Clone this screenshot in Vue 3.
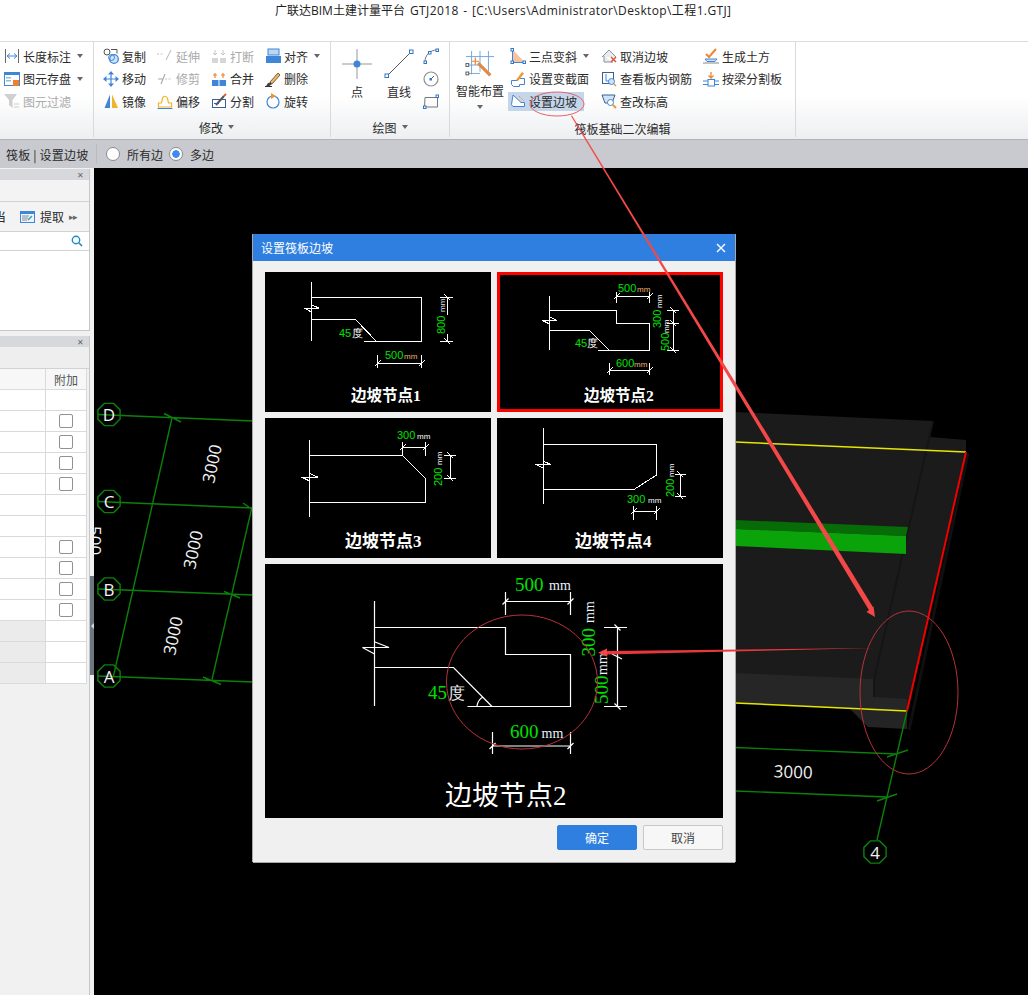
<template>
  <div class="page">
    <div class="titlebar">广联达BIM土建计量平台 <span class="title-file">GTJ2018 - [C:\Users\Administrator\Desktop\工程1.GTJ]</span></div>

    <div class="ribbon">
      <section class="group group-a">
        <div class="rows">
          <div v-for="item in groupA" :key="item.label" class="tool" :class="{ off: item.off }">
            <svg class="ico" viewBox="0 0 16 16" v-html="icons[item.icon]"></svg>
            <span>{{ item.label }}</span>
            <i v-if="item.caret" class="caret"></i>
          </div>
        </div>
      </section>

      <section class="group group-b">
        <div class="rows cols-4">
          <div v-for="item in groupB" :key="item.label" class="tool" :class="{ off: item.off }">
            <svg class="ico" viewBox="0 0 16 16" v-html="icons[item.icon]"></svg>
            <span>{{ item.label }}</span>
            <i v-if="item.caret" class="caret"></i>
          </div>
        </div>
        <div class="group-label">修改<i class="caret"></i></div>
      </section>

      <section class="group group-c">
        <div class="draw">
          <div class="big big-point">
            <svg width="32" height="32" viewBox="0 0 32 32">
              <path d="M16 1v30M1 16h30" stroke="#8f99a3" fill="none" />
              <circle cx="16" cy="16" r="3.5" fill="#3f86d8" />
            </svg>
            <span>点</span>
          </div>
          <div class="big big-line">
            <svg width="32" height="32" viewBox="0 0 32 32">
              <path d="M4 28L28 4" stroke="#555" fill="none" />
              <rect x="2" y="26" width="3.5" height="3.5" fill="#fff" stroke="#2f76c8" />
              <rect x="26.5" y="2" width="3.5" height="3.5" fill="#fff" stroke="#2f76c8" />
            </svg>
            <span>直线</span>
          </div>
          <div class="minis">
            <svg width="16" height="16" viewBox="0 0 16 16">
              <path d="M2 14C2 7 7 2 14 2" stroke="#777" fill="none" />
              <rect x="1" y="13" width="2.5" height="2.5" fill="#fff" stroke="#2f76c8" />
              <rect x="5.5" y="3.5" width="2.5" height="2.5" fill="#fff" stroke="#2f76c8" />
              <rect x="13" y="1" width="2.5" height="2.5" fill="#fff" stroke="#2f76c8" />
            </svg>
            <svg width="16" height="16" viewBox="0 0 16 16">
              <circle cx="8" cy="8" r="7" stroke="#8a8f96" stroke-width="1.2" fill="#fff" />
              <path d="M8 8L11 5" stroke="#555" fill="none" />
              <rect x="6.5" y="7" width="2.5" height="2.5" fill="#2f76c8" />
            </svg>
            <svg width="16" height="16" viewBox="0 0 16 16">
              <path d="M2 4.5h12.5v9.5H1.5z" stroke="#777" fill="none" />
              <rect x="13" y="2" width="2.5" height="2.5" fill="#fff" stroke="#2f76c8" />
              <rect x="0.5" y="13" width="2.5" height="2.5" fill="#fff" stroke="#2f76c8" />
            </svg>
          </div>
        </div>
        <div class="group-label">绘图<i class="caret"></i></div>
      </section>

      <section class="group group-d">
        <div class="smart-area">
          <div class="big big-smart">
            <svg width="30" height="30" viewBox="0 0 32 32">
              <path d="M7 1v25M16 1v22M25 1v22M1 7h30M1 16h16M1 25h15" stroke="#6fa3de" fill="none" />
              <rect x="1" y="14.5" width="3" height="3" fill="#fff" stroke="#555" />
              <rect x="1" y="23.5" width="3" height="3" fill="#fff" stroke="#555" />
              <path d="M14 14l13 13" stroke="#e08a4a" stroke-width="3.5" fill="none" />
              <path d="M11 8v8M7 12h8" stroke="#e8863a" stroke-width="1.3" fill="none" />
            </svg>
            <span>智能布置</span>
            <i class="caret caret-below"></i>
          </div>
          <div class="rows cols-slab">
            <div v-for="item in groupD" :key="item.label" class="tool" :class="{ active: item.active }">
              <svg class="ico" viewBox="0 0 16 16" v-html="icons[item.icon]"></svg>
              <span>{{ item.label }}</span>
              <i v-if="item.caret" class="caret"></i>
            </div>
          </div>
        </div>
        <div class="group-label">筏板基础二次编辑</div>
      </section>
      <section class="group group-rest"></section>
    </div>

    <div class="optionbar">
      <span class="crumb">筏板 | 设置边坡</span>
      <span class="opt-sep"></span>
      <label class="radio"><i></i>所有边</label>
      <label class="radio checked"><i></i>多边</label>
    </div>

    <div class="workspace">
      <aside class="side">
        <div class="panel panel-top">
          <div class="panel-head"><span class="x">✕</span></div>
          <div class="panel-strip"></div>
          <div class="panel-tools">
            <span class="clipped">当</span>
            <svg class="extract" width="15" height="12" viewBox="0 0 15 12">
              <rect x="0.5" y="0.5" width="14" height="11" fill="#eef4fb" stroke="#3f86d8" />
              <path d="M0 1h15v2H0z" fill="#3f86d8" />
              <path d="M2 5h7M2 7h6M2 9h5" stroke="#7f8c99" fill="none" />
              <path d="M8 9l4-4" stroke="#3aa0a0" stroke-width="1.5" fill="none" />
            </svg>
            <span>提取</span>
            <span class="more">▸▸</span>
          </div>
          <div class="panel-search">
            <svg width="12" height="12" viewBox="0 0 12 12">
              <circle cx="5" cy="5" r="3.7" fill="none" stroke="#1e8ac4" stroke-width="1.4" />
              <path d="M8 8l3 3" stroke="#1e8ac4" stroke-width="1.6" fill="none" />
            </svg>
          </div>
        </div>

        <div class="panel panel-bottom">
          <div class="panel-head"><span class="x">✕</span></div>
          <div class="panel-strip strip-tall"></div>
          <div class="table">
            <div class="tr th">
              <div class="td-left"></div>
              <div class="td-right">附加</div>
            </div>
            <div v-for="(row, i) in propRows" :key="i" class="tr">
              <div class="td-left" :class="{ shaded: row === 'grey' }"></div>
              <div class="td-right"><i v-if="row === 'check'" class="checkbox"></i></div>
            </div>
          </div>
        </div>
      </aside>

      <div class="gutter"><span class="handle"></span></div>

      <div class="canvas">
        <svg class="scene" viewBox="94 168 934 827">
          <polygon points="735,412 933,421 930,437 966,440 966,452 907,711 735,703" fill="#1b1b1b" />
          <polygon points="735,673 874,679 874,697 907,699 907,711 735,703" fill="#262626" />
          <polygon points="850,709 907,711 907,729 868,727" fill="#242424" />
          <path d="M933 421L874 680V697" stroke="#151515" stroke-width="2" fill="none" />
          <path d="M966 452L907 729" stroke="#101010" stroke-width="3" fill="none" transform="translate(2 1)" />
          <polygon points="735,520 908,527 906,536 735,529" fill="#076b07" />
          <polygon points="735,529 906,536 906,554 735,546" fill="#0aa30a" />
          <path d="M735 442L966 452M735 703L907 711" stroke="#e6e600" stroke-width="1.5" fill="none" />
          <path d="M966 452L907 711" stroke="#f00000" stroke-width="2" fill="none" />
          <path :d="gridLines" stroke="#0b800b" stroke-width="1.4" fill="none" />
          <g v-for="m in markers" :key="m.t">
            <polygon :points="octagon(m.x, m.y)" fill="none" stroke="#0b800b" stroke-width="1.4" />
            <text :x="m.x" :y="m.y + 6.5" class="axis" text-anchor="middle">{{ m.t }}</text>
          </g>
          <text v-for="d in spans" :key="d.x" class="axis" text-anchor="middle"
            :transform="`translate(${d.x} ${d.y}) rotate(${d.r})`">3000</text>
          <text class="axis" transform="translate(89 526) rotate(90)">500</text>
        </svg>
      </div>
    </div>

    <div class="dialog">
      <header class="dialog-head">
        <span>设置筏板边坡</span>
        <svg width="10" height="10" viewBox="0 0 10 10">
          <path d="M1 1l8 8M9 1l-8 8" stroke="#fff" stroke-width="1.4" fill="none" />
        </svg>
      </header>
      <div class="thumbs">
        <div v-for="d in diagrams" :key="d.title" class="thumb" :class="{ selected: d.selected }">
          <svg class="drawing" :viewBox="d.box">
            <path :d="d.path" stroke="#fff" fill="none" shape-rendering="crispEdges" />
            <text v-for="t in d.texts" :key="t.t + t.x + t.y" :x="t.x" :y="t.y" :font-size="t.s" :fill="t.c"
              class="sans" :transform="t.r ? `rotate(-90 ${t.x} ${t.y})` : null">{{ t.t }}</text>
            <text :x="d.tx" :y="d.ty" :font-size="d.ts" class="caption">{{ d.title }}</text>
          </svg>
        </div>
        <div class="thumb preview">
          <svg class="drawing" :viewBox="preview.box">
            <path :d="preview.path" stroke="#fff" fill="none" stroke-width="1.2" />
            <text v-for="t in preview.texts" :key="t.t + t.x + t.y" :x="t.x" :y="t.y" :font-size="t.s" :fill="t.c"
              class="serif" :transform="t.r ? `rotate(-90 ${t.x} ${t.y})` : null">{{ t.t }}</text>
            <text :x="preview.tx" :y="preview.ty" :font-size="preview.ts" class="caption caption-big">{{ preview.title }}</text>
          </svg>
        </div>
      </div>
      <footer class="dialog-foot">
        <button class="btn primary">确定</button>
        <button class="btn">取消</button>
      </footer>
    </div>

    <svg class="marks" viewBox="0 0 1028 995">
      <ellipse cx="557" cy="104" rx="27" ry="12" fill="none" stroke="#e2626a" />
      <polygon points="571,116 572,115.5 873.5,608 869.5,611" fill="#f44848" />
      <polygon points="875,617 866.5,612 873.5,606.5" fill="#f44848" />
      <ellipse cx="522" cy="682" rx="75.5" ry="67" fill="none" stroke="#b8323a" />
      <ellipse cx="909" cy="692.5" rx="49" ry="81.5" fill="none" stroke="#b8323a" />
      <polygon points="875,648 607,651 607,654.5" fill="#e8383c" />
      <polygon points="598,652.7 607,648.5 607,656.5" fill="#f44848" />
    </svg>
  </div>
</template>

<script setup>
const icons = {
  measure: '<path d="M1.5 1v14M14.5 1v14" stroke="#666" fill="none"/><path d="M3 8h10M3 8l3-2.5M3 8l3 2.5M13 8l-3-2.5M13 8l-3 2.5" stroke="#3f86d8" fill="none"/>',
  save: '<rect x="0.5" y="1.5" width="15" height="13" fill="#fff" stroke="#3f86d8"/><path d="M0 1h16v3H0z" fill="#3f86d8"/><rect x="2" y="6" width="5" height="1.5" fill="#9bb8d8"/><rect x="2" y="9" width="5" height="1.5" fill="#9bb8d8"/><rect x="9" y="9" width="6" height="6" fill="#f08030"/>',
  filter: '<path d="M0 1h13L8.5 7v8L5 12V7z" fill="#c8c8c8"/><path d="M10 11h5M10 14h5" stroke="#c8c8c8" fill="none"/>',
  copy: '<circle cx="4" cy="4" r="3" fill="#fff" stroke="#555"/><path d="M8 1.5h6v4" stroke="#555" fill="none"/><circle cx="11" cy="11" r="4.3" fill="#cfe2f6" stroke="#3f86d8" stroke-width="1.3"/><circle cx="8.5" cy="9.5" r="3" fill="none" stroke="#3f86d8"/>',
  move: '<path d="M8 1v14M1 8h14" stroke="#3f86d8" stroke-width="1.2" fill="none"/><path d="M8 0l3 3.5H5zM8 16l3-3.5H5zM0 8l3.5-3v6zM16 8l-3.5-3v6z" fill="#3f86d8"/>',
  mirror: '<path d="M7 1.5V15H1.5z" fill="#3f86d8"/><path d="M9 1.5V15h6z" fill="#f0b429"/>',
  extend: '<path d="M0 6h7" stroke="#bbb" stroke-dasharray="2 1.5" fill="none"/><path d="M9 12l5-10" stroke="#aaa" fill="none"/>',
  trim: '<path d="M1 8h5" stroke="#999" fill="none"/><path d="M8 8h7" stroke="#bbb" stroke-dasharray="2 1.5" fill="none"/><path d="M4 13l4-10" stroke="#888" fill="none"/>',
  offset: '<path d="M1.5 14V10h3l1-4.5c.5-3 4-3 5 0l1 4.5h3v4z" fill="#fff" stroke="#f0b429" stroke-width="1.2"/><path d="M0.5 15.5h15" stroke="#3f86d8" fill="none"/>',
  breaks: '<path d="M1 10h6v5H1zM9 10h6v5H9z" fill="#cfcfcf"/><path d="M4 2v5M2 5l2 2 2-2M12 2v5M10 5l2 2 2-2" stroke="#bbb" fill="none"/>',
  merge: '<path d="M1 9h6.5v6H1zM8.5 9H15v6H8.5z" fill="#3f86d8"/><path d="M4 2v5M2 4h4M12 2v5M10 4h4" stroke="#e8863a" stroke-width="1.2" fill="none"/>',
  split: '<rect x="1.5" y="6.5" width="13" height="8" fill="#fff" stroke="#3a5f94"/><path d="M5 12L13 3" stroke="#555" stroke-width="2" fill="none"/><path d="M13 3l2-2" stroke="#d95b3a" stroke-width="2" fill="none"/><path d="M3 10.5h5" stroke="#3a5f94" fill="none"/>',
  align: '<rect x="3" y="1" width="11" height="6" fill="#bcd6f2" stroke="#3f86d8"/><rect x="1" y="8" width="15" height="7" fill="#3f86d8"/>',
  erase: '<path d="M5 11L13 2l2 2-8 9z" fill="#e9b77b" stroke="#8a5a2a"/><path d="M3 12c2-1 3-.5 4 1l-2.5 2H1z" fill="#444"/><path d="M0 15.5h7" stroke="#333" fill="none"/>',
  rotate: '<circle cx="8" cy="9" r="6" fill="none" stroke="#3f86d8" stroke-width="1.2"/><path d="M6 0v6l5-3z" fill="#f0962e"/>',
  threePoint: '<path d="M2.5 1.5V14.5H15z" fill="#f7c3a0"/><path d="M2.5 2v12.5H14" stroke="#3f86d8" fill="none"/><rect x="1" y="0.5" width="2.5" height="2.5" fill="#fff" stroke="#2f76c8"/><rect x="1" y="13" width="2.5" height="2.5" fill="#fff" stroke="#2f76c8"/><rect x="13" y="13" width="2.5" height="2.5" fill="#fff" stroke="#2f76c8"/>',
  section: '<path d="M1.5 9.5h6l2-2h5v6h-5v2h-6l-2-2z" fill="#fff" stroke="#3f86d8"/><path d="M6 9l6-8 2 1.5-6 7.5z" fill="#f0962e"/>',
  slope: '<path d="M1.5 11.5L3 2l8 7.5h3.5v4H3z" fill="#fff" stroke="#3f86d8"/><path d="M9 3l5 5" stroke="#f0962e" stroke-dasharray="1.5 1" fill="none"/>',
  cancel: '<path d="M1 9l7-7 7 7M3 8v6h9" fill="#e8ecf1" stroke="#8a929c"/><path d="M10 9l5 5M15 9l-5 5" stroke="#d9553a" stroke-width="1.5" fill="none"/>',
  rebar: '<rect x="1.5" y="1.5" width="11" height="11" fill="#fff" stroke="#3a5f94"/><path d="M5 3v7h4" stroke="#3f86d8" fill="none"/><circle cx="10.5" cy="10.5" r="3" fill="#cfe2f6" stroke="#3f86d8"/><path d="M13 13l2 2" stroke="#f0962e" stroke-width="1.5" fill="none"/>',
  level: '<path d="M1 2h13l-3 8H4z" fill="#cfe2f6" stroke="#3a5f94"/><circle cx="9.5" cy="9.5" r="3" fill="#fff" stroke="#3f86d8"/><path d="M12 12l3 3" stroke="#f0962e" stroke-width="2" fill="none"/>',
  earth: '<path d="M3 6l3 3 7-8" stroke="#f0862e" stroke-width="2" fill="none"/><path d="M2 11h12l-2 2.5H4z" fill="#cfe2f6" stroke="#3f86d8"/><path d="M0 15h16" stroke="#888" fill="none"/>',
  beamSplit: '<path d="M8 1v6M5.5 4.5L8 7l2.5-2.5" stroke="#f0862e" stroke-width="1.3" fill="none"/><rect x="5" y="8.5" width="6.5" height="6.5" fill="#fff" stroke="#3f86d8"/><path d="M0 10h5M11.5 13.5H16M0 13.5h5M11.5 10H16" stroke="#3f86d8" fill="none"/>'
}

const groupA = [
  { icon: 'measure', label: '长度标注', caret: true },
  { icon: 'save', label: '图元存盘', caret: true },
  { icon: 'filter', label: '图元过滤', off: true }
]

const groupB = [
  { icon: 'copy', label: '复制' },
  { icon: 'extend', label: '延伸', off: true },
  { icon: 'breaks', label: '打断', off: true },
  { icon: 'align', label: '对齐', caret: true },
  { icon: 'move', label: '移动' },
  { icon: 'trim', label: '修剪', off: true },
  { icon: 'merge', label: '合并' },
  { icon: 'erase', label: '删除' },
  { icon: 'mirror', label: '镜像' },
  { icon: 'offset', label: '偏移' },
  { icon: 'split', label: '分割' },
  { icon: 'rotate', label: '旋转' }
]

const groupD = [
  { icon: 'threePoint', label: '三点变斜', caret: true },
  { icon: 'cancel', label: '取消边坡' },
  { icon: 'earth', label: '生成土方' },
  { icon: 'section', label: '设置变截面' },
  { icon: 'rebar', label: '查看板内钢筋' },
  { icon: 'beamSplit', label: '按梁分割板' },
  { icon: 'slope', label: '设置边坡', active: true },
  { icon: 'level', label: '查改标高' }
]

const propRows = ['', 'check', 'check', 'check', 'check', '', '', 'check', 'check', 'check', 'check', 'grey', 'grey', 'grey']

// axis markers and grid on the canvas, in page coordinates
const markers = [
  { t: 'D', x: 109, y: 414.5 },
  { t: 'C', x: 109, y: 501.5 },
  { t: 'B', x: 109, y: 589 },
  { t: 'A', x: 109, y: 676 },
  { t: '4', x: 875, y: 852 }
]

const spans = [
  { x: 218, y: 465, r: -78 },
  { x: 199, y: 551, r: -78 },
  { x: 179, y: 637, r: -78 },
  { x: 793, y: 778, r: 2 }
]

const gridLines = [
  'M98 414.5L253 421', 'M98 501.5L253 508', 'M98 589L253 595', 'M98 676L253 682',
  'M735 747.5L897 754', 'M735 791L887 797',
  'M172 418L113.5 676', 'M252 507L212 679.5', 'M907 711L877 840',
  'M164 413.5L181 422', 'M243 503L253 510', 'M224 591.5L240 598', 'M203 677L221 684.5',
  'M887 757L908 750', 'M877 801L897 794'
].join('')

const octagon = (cx, cy, r = 12) => {
  const pts = []
  for (let i = 0; i < 8; i++) {
    const a = Math.PI / 8 + (i * Math.PI) / 4
    pts.push(`${(cx + r * Math.cos(a)).toFixed(1)},${(cy + r * Math.sin(a)).toFixed(1)}`)
  }
  return pts.join(' ')
}

const dimH = (x1, x2, y, top, bot) =>
  `M${x1} ${y}H${x2}M${x1} ${top}V${bot}M${x2} ${top}V${bot}M${x1 - 3} ${y + 3}L${x1 + 3} ${y - 3}M${x2 - 3} ${y + 3}L${x2 + 3} ${y - 3}`

const dimV = (x, ys, left, right) => {
  let d = `M${x} ${ys[0]}V${ys[ys.length - 1]}`
  for (const y of ys) {
    d += `M${left} ${y}H${right}M${x - 3} ${y - 3}L${x + 3} ${y + 3}`
  }
  return d
}

const green = '#00e000'

const diagrams = [
  {
    title: '边坡节点1',
    box: '265 272 226 140',
    tx: 351, ty: 401, ts: 15.5,
    path: 'M311.5 282V341M311.5 297.5H421.5V341.5H363.5M376.5 341.5L355.5 319.5H311.5M311.5 305L319 308H304L311.5 312'
      + dimH(377.5, 421.5, 363.5, 355, 368)
      + 'M447.5 297.5V315M447.5 334V341.5M440 297.5H453M440 341.5H453M444.5 294.5L450.5 300.5M444.5 338.5L450.5 344.5',
    texts: [
      { t: '800', x: 445, y: 334, s: 11, c: green, r: true },
      { t: 'mm', x: 445, y: 312, s: 8, c: '#dfeaf6', r: true },
      { t: '45', x: 339, y: 337, s: 11, c: green },
      { t: '度', x: 352, y: 337, s: 11, c: '#fff' },
      { t: '500', x: 385, y: 359, s: 11, c: green },
      { t: 'mm', x: 404, y: 359, s: 8, c: '#f0b070' }
    ]
  },
  {
    title: '边坡节点2',
    selected: true,
    box: '500 275 220 134',
    tx: 584, ty: 401, ts: 15.5,
    path: 'M549.5 296V350M549.5 310.5H616.5V323.5H649.5V350.5H597.5M609.5 350.5L589.5 330.5H549.5M550 317L556.5 320.5H542.5L549.5 324'
      + dimH(616.5, 649.5, 296.5, 292, 303)
      + dimV(673.5, [310.5, 323.5, 350.5], 667, 679)
      + dimH(609.5, 649.5, 370.5, 363, 375),
    texts: [
      { t: '500', x: 618, y: 292, s: 11, c: green },
      { t: 'mm', x: 637, y: 292, s: 8, c: '#f0b070' },
      { t: '600', x: 616, y: 367, s: 11, c: green },
      { t: 'mm', x: 634, y: 367, s: 8, c: '#f0b070' },
      { t: '45', x: 575, y: 347, s: 11, c: green },
      { t: '度', x: 587, y: 347, s: 11, c: '#fff' },
      { t: '300', x: 661, y: 328, s: 11, c: green, r: true },
      { t: 'mm', x: 662, y: 308, s: 8, c: '#fff', r: true },
      { t: '500', x: 669, y: 351, s: 11, c: green, r: true },
      { t: 'mm', x: 669, y: 333, s: 8, c: '#fff', r: true }
    ]
  },
  {
    title: '边坡节点3',
    box: '265 418 226 140',
    tx: 345, ty: 547, ts: 17,
    path: 'M309.5 440V516.5M309.5 455.5H402.5L425.5 478.5V502.5H309.5M310 473.5L317.5 477H301.5L309.5 481'
      + dimH(402.5, 425.5, 447.5, 442, 456)
      + dimV(450.5, [455.5, 478.5], 443.5, 456),
    texts: [
      { t: '300', x: 397, y: 439, s: 11, c: green },
      { t: 'mm', x: 417, y: 439, s: 8, c: '#fff' },
      { t: '200', x: 442, y: 486, s: 11, c: green, r: true },
      { t: 'mm', x: 442, y: 465, s: 8, c: '#fff', r: true }
    ]
  },
  {
    title: '边坡节点4',
    box: '497 418 226 140',
    tx: 575, ty: 547, ts: 17,
    path: 'M543.5 428V504M543.5 444.5H656.5V475L634 489.5H543.5M544 461.5L551 464.5H535.5L543.5 468'
      + dimV(680.5, [474.5, 496.5], 675, 686)
      + dimH(633.5, 656.5, 511.5, 505.5, 520),
    texts: [
      { t: '200', x: 674, y: 497, s: 11, c: green, r: true },
      { t: 'mm', x: 674, y: 477, s: 8, c: '#fff', r: true },
      { t: '300', x: 627, y: 503, s: 11, c: green },
      { t: 'mm', x: 648, y: 503, s: 8, c: '#fff' }
    ]
  }
]

const preview = {
  title: '边坡节点2',
  box: '265 564 458 254',
  tx: 445, ty: 805, ts: 27,
  path: 'M374.5 601V706M374.5 627.5H505.5V654.5H570.5V706.5H467.5M492 706.5L453.5 667.5H374.5M375 642L389 647.5H362.5L374.5 654'
    + 'M477 706A12 12 0 0 1 483 697'
    + dimH(505.5, 570.5, 601.5, 592, 615)
    + dimV(617.5, [627.5, 706.5], 604, 627)
    + 'M612 654L622 659'
    + dimH(492.5, 570.5, 746, 732, 754),
  texts: [
    { t: '500', x: 515, y: 591, s: 19, c: green },
    { t: 'mm', x: 549, y: 590, s: 14, c: '#e8f2ff' },
    { t: '600', x: 510, y: 738, s: 19, c: green },
    { t: 'mm', x: 541.5, y: 738, s: 14, c: '#e8f2ff' },
    { t: '45', x: 428, y: 699, s: 19, c: green },
    { t: '度', x: 448, y: 699, s: 17, c: '#e8e8e8' },
    { t: '300', x: 595, y: 656.5, s: 19, c: green, r: true },
    { t: 'mm', x: 594, y: 623, s: 14, c: '#e8f2ff', r: true },
    { t: '500', x: 608, y: 704, s: 19, c: green, r: true },
    { t: 'mm', x: 607, y: 675, s: 14, c: '#e8f2ff', r: true }
  ]
}
</script>

<style scoped>
.page {
  position: relative;
  width: 1028px;
  height: 995px;
  overflow: hidden;
  background: #000;
  font-family: "Noto Sans CJK SC", "Liberation Sans", sans-serif;
  font-size: 12px;
  color: #2b2b2b;
}

.titlebar {
  height: 41px;
  box-sizing: border-box;
  padding: 3px 0 0 275px;
  background: #fff;
  font-family: "Open Sans", "Noto Sans CJK SC", sans-serif;
  line-height: 15px;
  white-space: nowrap;
  color: #222;
}

.title-file {
  margin-left: 2px;
  letter-spacing: 0.38px;
  word-spacing: 1px;
}

.ribbon {
  display: flex;
  height: 99px;
  border-top: 1px solid #dcdcdc;
  box-sizing: border-box;
  background: linear-gradient(#fff 55%, #eceef0);
  box-shadow: inset 0 -1px 0 #b0b2b6;
}

.group {
  display: flex;
  flex-direction: column;
  box-sizing: border-box;
  border-right: 1px solid #d8dadc;
  margin-bottom: 3px;
}

.group-a { width: 94px; padding-left: 4px; }
.group-b { width: 237px; padding-left: 9px; }
.group-c { width: 119px; }
.group-d { width: 346px; }
.group-rest { flex: 1; border-right: 0; }

.rows {
  display: grid;
  grid-auto-rows: 22.5px;
  padding-top: 3px;
  height: 72px;
  box-sizing: border-box;
}

.cols-4 { grid-template-columns: repeat(4, 54px); }
.cols-slab { grid-template-columns: 91px 102px 93px; }

.tool {
  display: flex;
  align-items: center;
  gap: 3px;
  white-space: nowrap;
  height: 22.5px;
}

.tool.off { color: #aaa; }
.tool.off .ico { opacity: 0.85; }

.tool.active {
  position: relative;
  z-index: 0;
}

.tool.active::before {
  content: "";
  position: absolute;
  left: -2px;
  top: 2px;
  width: 76px;
  height: 19px;
  background: #c5d5ea;
  z-index: -1;
}

.ico {
  width: 16px;
  height: 16px;
  flex: none;
}

.caret {
  display: inline-block;
  width: 0;
  height: 0;
  margin-left: 3px;
  border: 3.5px solid transparent;
  border-top: 4px solid #666;
  border-bottom: 0;
}

.group-label {
  flex: 1;
  display: flex;
  align-items: center;
  justify-content: center;
  padding-top: 3px;
}

.group-label .caret { margin-left: 5px; }
.group-d .group-label { padding-top: 5px; }

.draw {
  display: flex;
  height: 72px;
  box-sizing: border-box;
  padding: 5px 0 0 10px;
}

.big {
  display: flex;
  flex-direction: column;
  align-items: center;
}

.big span { margin-top: 4px; line-height: 16px; }
.big-point { width: 32px; }
.big-point svg { margin-top: 1px; }
.big-line { width: 52px; }
.big-line svg { margin-top: 1px; }

.minis {
  display: flex;
  flex-direction: column;
  gap: 6.5px;
  margin-left: -2px;
  margin-top: 1px;
}

.smart-area {
  display: flex;
  height: 72px;
  padding-left: 6px;
}

.big-smart {
  width: 48px;
  margin-right: 6px;
  white-space: nowrap;
  padding-top: 8px;
}

.big-smart span { margin-top: 3px; }
.caret-below { margin: 6px 0 0; }

.optionbar {
  display: flex;
  align-items: center;
  height: 28px;
  background: #c8cacf;
  box-sizing: border-box;
  padding: 0 0 0 6px;
}

.crumb {
  width: 90px;
  white-space: nowrap;
  letter-spacing: 0.2px;
}

.opt-sep {
  width: 1px;
  height: 20px;
  margin-right: 9px;
  background: #babcc0;
}

.radio {
  display: flex;
  align-items: center;
  gap: 7px;
  margin-right: 6px;
}

.radio i {
  width: 14px;
  height: 14px;
  box-sizing: border-box;
  border: 1px solid #8a8c90;
  border-radius: 50%;
  background: #fff;
}

.radio.checked i {
  background: radial-gradient(circle, #3f8cf0 0 3.5px, #fff 4px);
}

.workspace {
  display: flex;
  height: 827px;
}

.side {
  width: 90px;
  flex: none;
  box-sizing: border-box;
  padding-top: 1px;
  background: #f1f1f2;
  display: flex;
  flex-direction: column;
}

.panel {
  box-sizing: border-box;
  border-right: 1px solid #c4c6ca;
  background: #fff;
}

.panel-top {
  height: 162px;
  border-bottom: 1px solid #c4c6ca;
}

.panel-bottom {
  flex: 1;
  margin-top: 5px;
  background: #f1f1f2;
}

.panel-head {
  display: flex;
  justify-content: flex-end;
  align-items: center;
  height: 11px;
  padding-right: 5px;
  background: #d6d8dc;
}

.x {
  font-size: 8px;
  line-height: 11px;
  color: #666;
}

.panel-strip {
  height: 22px;
  box-sizing: border-box;
  background: #f3f3f4;
  border-bottom: 1px solid #d0d2d6;
}

.strip-tall { background: #eeeeef; }

.panel-tools {
  display: flex;
  align-items: center;
  height: 30px;
  background: #f3f3f4;
  border-bottom: 1px solid #d0d2d6;
  box-sizing: border-box;
}

.clipped { margin-left: -6px; }
.extract { margin: 0 5px 0 14px; }

.more {
  margin-left: 5px;
  font-size: 9px;
  letter-spacing: -1px;
  color: #666;
}

.panel-search {
  display: flex;
  justify-content: flex-end;
  align-items: center;
  height: 19px;
  padding-right: 6px;
  box-sizing: border-box;
  border-bottom: 1px solid #d0d2d6;
}

.table {
  width: 87px;
  background: #fff;
}

.tr {
  display: flex;
  height: 21px;
  box-sizing: border-box;
  border-bottom: 1px solid #d8dadc;
}

.td-left {
  width: 46px;
  box-sizing: border-box;
  border-right: 1px solid #d8dadc;
}

.td-left.shaded { background: #ebebeb; }

.td-right {
  flex: 1;
  display: flex;
  align-items: center;
  justify-content: center;
  border-right: 1px solid #d8dadc;
}

.th { color: #555; background: #f7f7f8; }

.checkbox {
  width: 14px;
  height: 14px;
  box-sizing: border-box;
  border: 1px solid #8f9194;
  border-radius: 2px;
  background: #fff;
}

.gutter {
  position: relative;
  width: 4px;
  flex: none;
  background: #f1f1f2;
}

.handle {
  display: block;
  position: absolute;
  top: 408px;
  width: 4px;
  height: 99px;
  background: #6e7680;
}

.handle::after {
  content: "";
  position: absolute;
  left: 0.5px;
  top: 47px;
  border: 3px solid transparent;
  border-left: 0;
  border-right: 3px solid #d4d6da;
}

.canvas {
  flex: 1;
  background: #000;
}

.scene {
  display: block;
  width: 934px;
  height: 827px;
}

.axis {
  fill: #f2f2f2;
  font-family: "Open Sans", sans-serif;
  font-size: 17px;
}

.dialog {
  position: absolute;
  left: 253px;
  top: 234px;
  width: 482px;
  height: 628px;
  background: #f0f0f0;
  box-shadow: -1px 0 0 #a8a8a8, 1px 0 0 #a8a8a8, 0 1px 0 #a8a8a8;
}

.dialog-head {
  display: flex;
  align-items: center;
  justify-content: space-between;
  height: 27px;
  padding: 0 9px 0 8px;
  background: #2e7fe0;
  color: #fff;
}

.thumbs {
  display: grid;
  grid-template-columns: 226px 226px;
  grid-template-rows: 140px 140px 254px;
  gap: 6px;
  padding: 11px 12px 0;
}

.thumb {
  background: #000;
  box-sizing: border-box;
}

.thumb.selected { border: 3px solid #f00; }
.thumb.preview { grid-column: 1 / 3; }

.drawing {
  display: block;
  width: 100%;
  height: 100%;
}

.sans { font-family: "Liberation Sans", sans-serif; }
.serif { font-family: "Liberation Serif", serif; }

.caption {
  fill: #fff;
  font-family: "Liberation Serif", "Noto Sans CJK SC", serif;
  font-weight: 700;
}

.caption-big { font-weight: 400; }

.dialog-foot {
  display: flex;
  justify-content: flex-end;
  gap: 6px;
  padding: 7px 12px 0;
}

.btn {
  width: 80px;
  height: 25px;
  padding: 0;
  box-sizing: border-box;
  border: 1px solid #c8c8c8;
  border-radius: 2px;
  background: #f7f7f7;
  font: inherit;
  color: #444;
}

.btn.primary {
  border-color: #2e7fe0;
  background: #2e7fe0;
  color: #fff;
}

.marks {
  position: absolute;
  left: 0;
  top: 0;
  width: 1028px;
  height: 995px;
  pointer-events: none;
}
</style>

<style>
html, body {
  margin: 0;
  background: #000;
}
</style>
